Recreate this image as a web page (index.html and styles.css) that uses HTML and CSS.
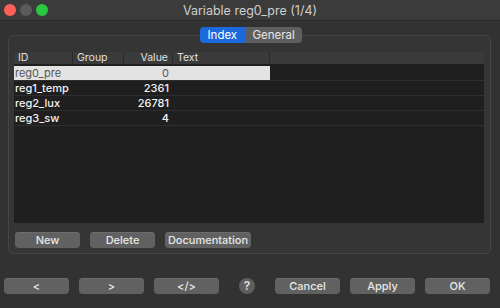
FILE: index.html
```html
<!DOCTYPE html>
<html>
<head>
<link rel="stylesheet" href="styles.css">
</head>
<body>

<div class="window">
  <div class="titlebar">
    <div class="lights">
      <span class="light red"></span>
      <span class="light grey"></span>
      <span class="light green"></span>
    </div>
    <div class="title">Variable reg0_pre (1/4)</div>
    <div></div>
  </div>

  <div class="tabs">
    <span class="tab active">Index</span>
    <span class="tab">General</span>
  </div>

  <div class="groupbox">
    <div class="table">
      <div class="th">ID</div>
      <div class="th">Group</div>
      <div class="th num">Value</div>
      <div class="th">Text</div>
      <div class="th last"></div>

      <div class="td sel">reg0_pre</div>
      <div class="td sel"></div>
      <div class="td sel num">0</div>
      <div class="td sel"></div>
      <div class="td"></div>

      <div class="td">reg1_temp</div>
      <div class="td"></div>
      <div class="td num">2361</div>
      <div class="td"></div>
      <div class="td"></div>

      <div class="td">reg2_lux</div>
      <div class="td"></div>
      <div class="td num">26781</div>
      <div class="td"></div>
      <div class="td"></div>

      <div class="td">reg3_sw</div>
      <div class="td"></div>
      <div class="td num">4</div>
      <div class="td"></div>
      <div class="td"></div>
    </div>

    <div class="actions">
      <button class="btn w65">New</button>
      <button class="btn w65">Delete</button>
      <button class="btn w86">Documentation</button>
    </div>
  </div>

  <div class="footer">
    <button class="btn w65">&lt;</button>
    <button class="btn w65">&gt;</button>
    <button class="btn w65">&lt;/&gt;</button>
    <span class="help">?</span>
    <button class="btn w65">Cancel</button>
    <button class="btn w65">Apply</button>
    <button class="btn w65">OK</button>
  </div>
</div>

</body>
</html>
```

FILE: styles.css
```css
body {
  margin: 0;
  background: #323232;
  font-family: "Inter", "Liberation Sans", sans-serif;
  color: #e6e6e6;
}

.window {
  width: 500px;
  height: 308px;
  overflow: hidden;
}

.titlebar {
  height: 20px;
  display: grid;
  grid-template-columns: 1fr auto 1fr;
  align-items: center;
  background: #3b3b3b;
  border-bottom: 1px solid #2a2a2a;
}

.lights {
  display: flex;
  gap: 4px;
  padding-left: 4px;
}

.light {
  width: 12px;
  height: 12px;
  border-radius: 50%;
}

.red { background: #fe5f57; }
.grey { background: #5b5b5b; }
.green { background: #2ac840; }

.title {
  font-size: 12.5px;
  color: #cfcfcf;
}

.tabs {
  display: flex;
  justify-content: center;
  margin: 6px 0 -8px 0;
  padding-left: 1px;
  position: relative;
  z-index: 1;
}

.tab {
  height: 16px;
  line-height: 16px;
  font-size: 11.5px;
  padding: 0 8px;
  background: #5e5e5e;
  color: #e8e8e8;
}

.tab:first-child {
  width: 29px;
  border-radius: 4px 0 0 4px;
}

.tab:last-child {
  width: 41px;
  border-radius: 0 4px 4px 0;
}

.tab.active {
  background: #1b69db;
  color: #fff;
}

.groupbox {
  margin: 0 9px 0 8px;
  padding: 16px 6px 5px 5px;
  border: 1px solid #454545;
  border-radius: 5px;
  background: #353535;
}

.table {
  height: 171px;
  display: grid;
  grid-template-columns: 59px 51px 49px 97px 1fr;
  grid-template-rows: 13px 16px;
  grid-auto-rows: 15px;
  align-content: start;
  background: #1f1f1f;
  font-size: 11px;
}

.th {
  background: #3a3a3a;
  border-right: 1px solid #2a2a2a;
  border-bottom: 1px solid #1f1f1f;
  font-size: 10.5px;
  line-height: 12px;
  padding: 0 4px;
  color: #e0e0e0;
}

.th.last {
  border-right: none;
}

.td {
  border-bottom: 1px solid #2e2e2e;
  line-height: 15px;
  padding: 0 4px 0 1px;
  font-weight: 500;
  color: #f2f2f2;
}

.num {
  text-align: right;
}

.td.sel {
  background: #e3e3e3;
  color: #555;
  font-weight: 400;
  border-top: 1px solid #1f1f1f;
  line-height: 14px;
}

.actions {
  display: flex;
  gap: 10px;
  margin-top: 9px;
  padding-left: 1px;
}

.btn {
  height: 16px;
  padding: 0;
  border: none;
  border-radius: 4px;
  background: #616161;
  box-shadow: inset 0 1px 0 #6c6c6c;
  color: #e8e8e8;
  font-family: inherit;
  font-size: 11px;
  font-weight: 500;
  line-height: 16px;
}

.w65 { width: 65px; }
.w86 { width: 86px; }

.footer {
  display: flex;
  align-items: center;
  gap: 10px;
  margin-top: 24px;
  padding-left: 4px;
}

.help {
  width: 16px;
  height: 16px;
  border-radius: 50%;
  background: #5e5e5e;
  color: #e0e0e0;
  font-size: 12px;
  font-weight: 600;
  line-height: 16px;
  text-align: center;
  margin: 0 10px 0 10px;
}
```
